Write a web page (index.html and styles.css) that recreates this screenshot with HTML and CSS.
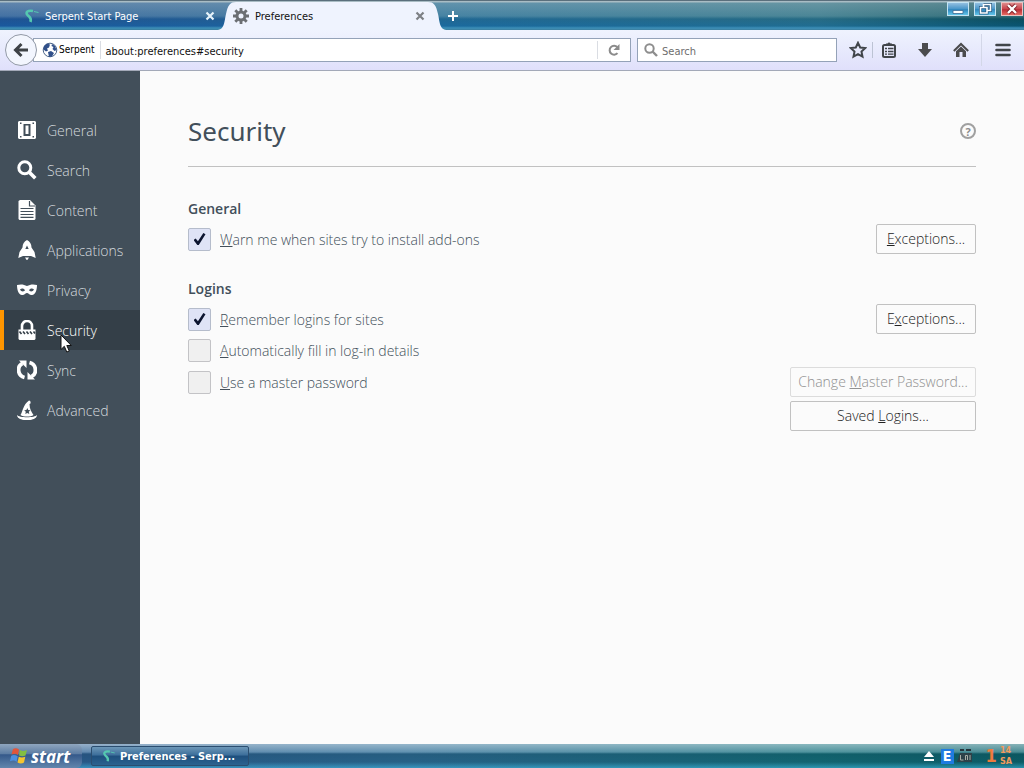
FILE: index.html
```html
<!DOCTYPE html>
<html lang="en">
<head>
    <meta charset="UTF-8">
    <meta name="viewport" content="width=device-width, initial-scale=1.0">
    <title>Preferences</title>
    <link rel="stylesheet" href="styles.css">
</head>
<body>

<!-- Tab strip -->
<header class="titlebar">
    <div class="tab">
        <svg class="tab-icon" viewBox="0 0 16 16"><path d="M9 3C4 2 1 4 3.500 7C5 9 8 9.500 6.500 14" fill="none" stroke="#55c8b0" stroke-width="2.600"/><path d="M10 3.500l4.500 1" stroke="#55c8b0" fill="none"/></svg>
        <span class="tab-label">Serpent Start Page</span>
        <button class="tab-close" aria-label="Close tab"><svg viewBox="0 0 10 10"><path d="M1.500 1.500l7 7M8.500 1.500l-7 7" stroke="currentColor" stroke-width="2.200"/></svg></button>
    </div>
    <div class="tab tab-active">
        <svg class="tab-curve" viewBox="0 0 20 28" preserveAspectRatio="none"><path d="M0 28C9 28 8 20 10 12C12 3 14 0 20 0V28Z" fill="#eff3fe"/></svg>
        <div class="tab-body">
            <svg class="tab-icon" viewBox="0 0 16 16"><g fill="none" stroke="#6c6f73"><circle cx="8" cy="8" r="4" stroke-width="3"/><path d="M8 0v3M8 13v3M0 8h3M13 8h3M2.300 2.300l2.200 2.200M11.500 11.500l2.200 2.200M2.300 13.700l2.200-2.200M11.500 4.500l2.200-2.200" stroke-width="2.800"/></g></svg>
            <span class="tab-label">Preferences</span>
            <button class="tab-close" aria-label="Close tab"><svg viewBox="0 0 10 10"><path d="M1.500 1.500l7 7M8.500 1.500l-7 7" stroke="currentColor" stroke-width="2.200"/></svg></button>
        </div>
        <svg class="tab-curve" viewBox="0 0 20 28" preserveAspectRatio="none"><path d="M20 28C11 28 12 20 10 12C8 3 6 0 0 0V28Z" fill="#eff3fe"/></svg>
    </div>
    <button class="new-tab" aria-label="New tab"><svg viewBox="0 0 10 10"><path d="M5 0v10M0 5h10" stroke="#fff" stroke-width="2"/></svg></button>
    <div class="window-buttons">
        <button class="window-button" aria-label="Minimize"><svg viewBox="0 0 22 14"><path d="M6 8.500h10v3H6z" fill="#fff" stroke="#3b6b94" stroke-width=".8"/></svg></button>
        <button class="window-button" aria-label="Restore"><svg viewBox="0 0 22 14"><path d="M9.500 2.500h7v6h-3M6.500 5.500h6.500v5.500h-6.500z" fill="none" stroke="#24577f" stroke-width="3"/><path d="M9.500 5V2.500h7v6h-3M6.500 5.500h6.500v5.500h-6.500z" fill="none" stroke="#fff" stroke-width="1.600"/></svg></button>
        <button class="window-button window-close" aria-label="Close"><svg viewBox="0 0 22 14"><path d="M7 3l8 8M15 3l-8 8" stroke="#832028" stroke-width="4"/><path d="M7 3l8 8M15 3l-8 8" stroke="#fff" stroke-width="2.400"/></svg></button>
    </div>
</header>

<!-- Navigation bar -->
<div class="toolbar">
    <button class="back" aria-label="Back"><svg viewBox="0 0 16 16"><path d="M8.500 2L2.500 8l6 6M3 8h12" fill="none" stroke="#3f4347" stroke-width="3"/></svg></button>
    <div class="urlbar">
        <svg class="globe" viewBox="0 0 16 16"><circle cx="8" cy="8" r="6.800" fill="#fff" stroke="#4a6488" stroke-width="1"/><path d="M2 4l3-2.500 3 1-1 3-2 1 1 2-2 1-2.500-2zM10 2l3 2 1.500 4-2 1-2-2 1-2-2-1zM6 10l3-1 3 2-2 3.500-3 .5z" fill="#31508a"/></svg>
        <span class="identity">Serpent</span>
        <input class="url" type="text" aria-label="Address" value="about:preferences#security">
        <button class="reload" aria-label="Reload"><svg viewBox="0 0 14 14"><path d="M10.500 10.200A4.500 4.500 0 1 1 10.300 4" fill="none" stroke="#8b8b8b" stroke-width="2"/><path d="M12.500 1v6h-6z" fill="#8b8b8b"/></svg></button>
    </div>
    <div class="searchbar">
        <svg class="search-icon" viewBox="0 0 14 14"><circle cx="5.500" cy="5.500" r="4.200" fill="none" stroke="#8d8d8d" stroke-width="2"/><path d="M8.500 8.500L13 13" stroke="#8d8d8d" stroke-width="2.400"/></svg>
        <input class="search" type="text" aria-label="Search" placeholder="Search">
    </div>
    <button class="tool tool-star" aria-label="Bookmark this page"><svg viewBox="0 0 18 18"><path d="M9 1.800l2.200 4.700 5 .6-3.700 3.500 1 5.100L9 13.200l-4.500 2.500 1-5.100L1.800 7.100l5-.6z" fill="none" stroke="#41454a" stroke-width="2"/></svg></button>
    <span class="separator"></span>
    <button class="tool" aria-label="Bookmarks"><svg viewBox="0 0 18 18"><rect x="3" y="4" width="12" height="12" rx="1.500" fill="none" stroke="#41454a" stroke-width="2"/><path d="M6 4V2.500h1.500C8 1 10 1 10.500 2.500H12V4z" fill="#41454a"/><path d="M5 7.500h2M8 7.500h5.500M5 10.500h2M8 10.500h5.500M5 13.200h2M8 13.200h5.500" stroke="#41454a" stroke-width="1.300"/></svg></button>
    <button class="tool tool-download" aria-label="Downloads"><svg viewBox="0 0 18 18"><path d="M6 2h6v6h4l-7 8-7-8h4z" fill="#4b4b4d"/></svg></button>
    <button class="tool" aria-label="Home"><svg viewBox="0 0 18 18"><path d="M1.800 10L9 3l7.200 7" fill="none" stroke="#4b4b4d" stroke-width="2"/><path d="M4 10.200L9 5.600l5 4.600V16h-3.500v-5h-3v5H4z" fill="#4b4b4d"/></svg></button>
    <span class="separator separator-menu"></span>
    <button class="tool tool-menu" aria-label="Menu"><svg viewBox="0 0 18 18"><path d="M2.500 4h13M2.500 9h13M2.500 14h13" stroke="#41454a" stroke-width="2.600" stroke-linecap="round"/></svg></button>
</div>

<div class="page">
    <!-- Categories -->
    <nav class="categories">
        <a class="category" href="#general">
            <svg viewBox="0 0 20 20"><path fill-rule="evenodd" d="M2 1h16l1 1v16l-1 1H2l-1-1V2zM6.500 4v12h7V4zM3 2.500v1.500h1.500V2.500zM15.500 2.500v1.500H17V2.500zM3 16v1.500h1.500V16zM15.500 16v1.500H17V16z" fill="#fff"/><path d="M8.500 5.500h3V14h-3z" fill="#fff"/></svg>
            General
        </a>
        <a class="category" href="#search">
            <svg viewBox="0 0 20 20"><circle cx="7.800" cy="7.800" r="6" fill="none" stroke="#fff" stroke-width="3"/><path d="M12.300 12.300l6 6" stroke="#fff" stroke-width="3.600"/></svg>
            Search
        </a>
        <a class="category" href="#content">
            <svg viewBox="0 0 20 20"><path d="M3 0h10l5.500 5.500V19l-1 1H2.500l-1-1V1z" fill="#fff"/><path d="M12.500 1v5H18M3.500 8.500h13M3.500 11.500h13M3.500 14.500h13M3.500 17.300h13" fill="none" stroke="#424f5a" stroke-width="1.200"/></svg>
            Content
        </a>
        <a class="category" href="#applications">
            <svg viewBox="0 0 20 20"><path fill-rule="evenodd" d="M10 0c2.800 1.500 4.500 4 4.500 7.500l3 4.500 1.200 6-4.700-2H6l-4.700 2 1.200-6 3-4.500C5.500 4 7.200 1.500 10 0zM10 5.500L8.300 9h3.400z" fill="#fff"/><path d="M8 17.500h4l-2 3z" fill="#fff"/></svg>
            Applications
        </a>
        <a class="category" href="#privacy">
            <svg viewBox="0 0 20 20"><path fill-rule="evenodd" d="M0 5c4-1 7-.5 10 1 3-1.500 6-2 10-1 0 5-1.500 9.500-5 10-2.500.300-3.500-2-5-2s-2.500 2.300-5 2C1.500 14.500 0 10 0 5zM3 9.500c1 2.300 4 2.500 5 .8-1-2-3.500-2.500-5-.8zM17 9.500c-1.500-1.700-4-1.200-5 .8 1 1.700 4 1.500 5-.8z" fill="#fff"/></svg>
            Privacy
        </a>
        <a class="category category-selected" href="#security" aria-current="page">
            <svg viewBox="0 0 20 20"><path d="M5 10V6a5 5 0 0 1 10 0v4" fill="none" stroke="#fff" stroke-width="2.600"/><path d="M1.500 9.500h17V19l-1 1h-15l-1-1z" fill="#fff"/><path d="M2.500 11.500l2 2.500M6 11.500l2 2.500M9.500 11.500l2 2.500M13 11.500l2 2.500M16.500 11.500l1.500 2" stroke="#343f48" stroke-width="1.600"/></svg>
            Security
        </a>
        <a class="category" href="#sync">
            <svg viewBox="0 0 20 20"><path d="M7.500 17.500C0 15.500 0 6 5.500 3.500M12.500 2.500C20 4.500 20 14 14.500 16.500" fill="none" stroke="#fff" stroke-width="3.800"/><path d="M2 .5h7.500V8zM18 19.500h-7.500V12z" fill="#fff"/></svg>
            Sync
        </a>
        <a class="category" href="#advanced">
            <svg viewBox="0 0 20 20"><path d="M0 15c0 7 20 7 20 0-2 3-18 3-20 0z" fill="#fff"/><path fill-rule="evenodd" d="M3.500 15C6 11 6 5 12 .500c1 0 2 1 1.500 3L12.500 4c0 5 2 8 4 11-3 2-10 2-13 0zM10.300 8l-.9 2-2.200.2 1.600 1.600-.5 2.200 2-1.100 2 1.100-.5-2.200 1.600-1.600-2.200-.2z" fill="#fff"/></svg>
            Advanced
        </a>
        <svg class="pointer" viewBox="0 0 12 19"><path d="M1 1v14.500l3.300-3.200L6.800 18l2.500-1-2.500-5.500h4.500z" fill="#fff" stroke="#111"/></svg>
    </nav>

    <!-- Security pane -->
    <main class="pane">
        <div class="pane-header">
            <h1>Security</h1>
            <button class="help" aria-label="Help">?</button>
        </div>

        <h2>General</h2>
        <div class="row">
            <input type="checkbox" id="warnAddons" checked>
            <label for="warnAddons"><u>W</u>arn me when sites try to install add-ons</label>
            <button class="button"><u>E</u>xceptions...</button>
        </div>

        <h2 class="next-group">Logins</h2>
        <div class="row">
            <input type="checkbox" id="rememberLogins" checked>
            <label for="rememberLogins"><u>R</u>emember logins for sites</label>
            <button class="button">E<u>x</u>ceptions...</button>
        </div>
        <div class="row row-tall">
            <input type="checkbox" id="autofill">
            <label for="autofill"><u>A</u>utomatically fill in log-in details</label>
        </div>
        <div class="row row-tall">
            <input type="checkbox" id="masterPassword">
            <label for="masterPassword"><u>U</u>se a master password</label>
            <button class="button button-wide" disabled>Change <u>M</u>aster Password...</button>
        </div>
        <div class="row row-last">
            <button class="button button-wide">Saved <u>L</u>ogins...</button>
        </div>
    </main>
</div>

<!-- Taskbar -->
<footer class="taskbar">
    <button class="start">
        <svg viewBox="0 0 18 18"><path d="M3 2c2-1 4-1 6 .5L8 8C6 6.500 4 6.500 1.500 7.500z" fill="#e2553a"/><path d="M10 3c2 1.200 4 1.200 7 0l-1.500 5.500c-2 1-4 1-6.500 0z" fill="#83bf42"/><path d="M1.200 8.800c2-1 4-1 6.500.4L6.500 15C5 13.500 3 13.200 0 14.200z" fill="#4d8fe0"/><path d="M8.800 9.800c2 1 4 1 6.500 0L14 15.500c-2 1.200-4 1.200-6.500 0z" fill="#f6c52f"/></svg>
        start
    </button>
    <button class="task">
        <svg class="task-icon" viewBox="0 0 16 16"><path d="M9 3C4 2 1 4 3.500 7C5 9 8 9.500 6.500 14" fill="none" stroke="#55c8b0" stroke-width="2.600"/><path d="M10 3.500l4.500 1" stroke="#55c8b0" fill="none"/></svg>
        Preferences - Serp...
    </button>
    <div class="tray">
        <svg class="eject" viewBox="0 0 12 12"><path d="M6 1l5 6H1zM1 9h10v2H1z" fill="#fff"/></svg>
        <span class="tray-e">E</span>
        <svg class="tray-icon" viewBox="0 0 16 16"><path d="M3 1h4v2H3zM9 1h5v2H9z" fill="#26343a"/><path d="M3 5h12v9H0z" fill="#2d4249"/><path d="M3.500 7v5h3M8.500 12V7.500h2V12M13 7v5" stroke="#a9aea6" fill="none"/></svg>
        <span class="clock-hour">1</span>
        <div class="clock-rest">
            <span>14</span>
            <span>SA</span>
        </div>
    </div>
</footer>

</body>
</html>
```

FILE: styles.css
```css
* {
    box-sizing: border-box;
}
body {
    margin: 0;
    min-height: 100vh;
    display: flex;
    flex-direction: column;
    font-family: "DejaVu Sans Condensed", "DejaVu Sans", sans-serif;
    font-size: 11px;
    background: #fbfbfb;
}
button {
    padding: 0;
    border: 0;
    background: none;
    font: inherit;
    color: inherit;
    display: flex;
    align-items: center;
    justify-content: center;
}
input {
    font: inherit;
}
svg {
    display: block;
    flex: none;
}

/* Tab strip */
.titlebar {
    height: 30px;
    padding-top: 2px;
    display: flex;
    background:
        linear-gradient(#5a6f7c 0, #5a6f7c 1px, #a9bcc4 1px, #a9bcc4 2px, rgba(190, 200, 200, 0.4) 3px, rgba(170, 190, 190, 0.25) 16px, rgba(0, 40, 90, 0.1) 19px, rgba(0, 90, 170, 0.25) 26px, #3c8fb8 28px, #3c7f9f 30px),
        linear-gradient(90deg, #22589a 0, #266399 220px, #246f9a 440px, #2b7389 80%, #0c525e 100%);
}
.tab {
    width: 216px;
    display: flex;
    align-items: center;
    color: #fff;
    padding: 0 0 0 24px;
}
.tab-active {
    width: 232px;
    padding: 0;
    color: #111;
}
.tab-curve {
    width: 20px;
    height: 28px;
}
.tab-body {
    flex: 1;
    height: 28px;
    display: flex;
    align-items: center;
    background: #eff3fe;
}
.tab-icon {
    width: 16px;
    height: 16px;
    margin-right: 5px;
}
.tab-body .tab-icon {
    margin: 0 6px 0 -3px;
}
.tab-label {
    flex: 1;
}
.tab-close {
    width: 12px;
    height: 28px;
    color: #e6f3fb;
}
.tab-body .tab-close {
    color: #7d8085;
    margin-right: 2px;
}
.tab-close svg {
    width: 10px;
    height: 10px;
}
.new-tab {
    width: 10px;
    height: 28px;
}
.new-tab svg {
    width: 10px;
    height: 10px;
}
.window-buttons {
    margin-left: auto;
    padding-right: 1px;
    display: flex;
    gap: 5px;
}
.window-button {
    width: 22px;
    height: 14px;
    border: 1px solid #c4e4f3;
    background: linear-gradient(#92bfe0, #4795c8 50%, #2f86bd 55%, #63c6ea);
}
.window-button svg {
    width: 22px;
    height: 14px;
}
.window-close {
    background: linear-gradient(#dd8b8b, #c7424a 50%, #b92d36 55%, #e66a62);
    border-color: #ecc4c4;
}

/* Navigation bar */
.toolbar {
    height: 41px;
    padding-left: 5px;
    display: flex;
    align-items: center;
    background: linear-gradient(#eff3fe, #e0e0fb);
    border-bottom: 1px solid #a3a9b8;
}
.back {
    width: 32px;
    height: 32px;
    border: 1px solid #9299a6;
    border-radius: 50%;
    background: #f3f6fe;
    z-index: 1;
}
.back svg {
    width: 16px;
    height: 16px;
}
.urlbar,
.searchbar {
    height: 24px;
    display: flex;
    align-items: center;
    background: #fff;
    border: 1px solid #94a2b8;
}
.urlbar {
    flex: 1;
    margin-left: -4px;
    padding-left: 8px;
}
.globe {
    width: 16px;
    height: 16px;
}
.identity {
    margin-left: 1px;
    padding-right: 6px;
    border-right: 1px solid #dadde3;
    line-height: 18px;
    font-size: 10px;
}
.url,
.search {
    flex: 1;
    min-width: 0;
    height: 22px;
    padding: 2px 4px 0;
    border: 0;
    outline: 0;
    background: none;
    color: #111;
}
.search::placeholder {
    color: #6d6d6d;
}
.reload {
    width: 33px;
    height: 18px;
    border-left: 1px solid #dadde3;
}
.reload svg {
    width: 14px;
    height: 14px;
}
.searchbar {
    width: 200px;
    margin-left: 6px;
    padding-left: 6px;
}
.search-icon {
    width: 14px;
    height: 14px;
}
.tool {
    width: 32px;
    height: 32px;
}
.tool svg {
    width: 18px;
    height: 18px;
}
.tool-star {
    width: 28px;
    margin-left: 7px;
}
.tool-download {
    width: 40px;
}
.tool-menu {
    width: 42px;
}
.separator {
    width: 1px;
    height: 16px;
    background: #bcc3d4;
}
.separator-menu {
    height: 32px;
    margin-left: 4px;
    background: #d3d7e8;
}

/* Preferences page */
.page {
    flex: 1;
    display: flex;
    font-family: "Open Sans", "Noto Sans", sans-serif;
    font-size: 14px;
    color: #424f5a;
}
.categories {
    width: 140px;
    padding-top: 39px;
    position: relative;
    background: #424f5a;
}
.category {
    height: 40px;
    padding-left: 17px;
    display: flex;
    align-items: center;
    gap: 10px;
    color: #d5dade;
    font-weight: 300;
    text-decoration: none;
}
.category svg {
    width: 20px;
    height: 20px;
}
.category-selected {
    padding-left: 13px;
    border-left: 4px solid #ff9500;
    background: #343f48;
    color: #fff;
}
.pointer {
    position: absolute;
    left: 60px;
    top: 263px;
    width: 12px;
    height: 19px;
}
.pane {
    flex: 1;
    padding: 35px 48px;
}
.pane-header {
    display: flex;
    align-items: center;
    justify-content: space-between;
    padding-bottom: 10px;
    margin-bottom: 27px;
    border-bottom: 1px solid #c1c1c1;
}
h1 {
    margin: 0;
    font-family: "Noto Sans", sans-serif;
    font-size: 26px;
    font-weight: 400;
    line-height: 50px;
}
.help {
    width: 16px;
    height: 16px;
    border: 2px solid #a0a0a0;
    border-radius: 50%;
    font-size: 11px;
    font-weight: 700;
    color: #8c8c8c;
}
h2 {
    margin: 0;
    font-size: 14px;
    font-weight: 600;
    line-height: 30px;
}
.next-group {
    margin-top: 20px;
}
.row {
    min-height: 30px;
    display: flex;
    align-items: center;
    font-weight: 300;
}
.row-tall {
    min-height: 32px;
}
.row-last {
    margin-top: 3px;
}
.row input {
    appearance: none;
    width: 23px;
    height: 23px;
    margin: 0 9px 0 0;
    border: 1px solid #c3c3c6;
    border-radius: 2px;
    background: #f0f0f0;
    display: grid;
    place-items: center;
}
.row input:checked {
    background: #dfe3f6;
    border-color: #b5bccb;
}
.row input:checked::before {
    content: "";
    width: 12px;
    height: 12px;
    background: #0c1430;
    clip-path: polygon(0 58%, 18% 45%, 37% 68%, 82% 0, 100% 10%, 44% 100%, 32% 100%);
}
.button {
    width: 100px;
    height: 30px;
    margin-left: auto;
    padding-bottom: 2px;
    border: 1px solid #c1c1c1;
    border-radius: 2px;
    background: #fbfbfb;
    color: #222;
    white-space: pre;
}
.button-wide {
    width: 186px;
}
.button:disabled {
    color: #909090;
    border-color: #dcdcdc;
}

/* Taskbar */
.taskbar {
    height: 24px;
    display: flex;
    align-items: center;
    color: #fff;
    background:
        linear-gradient(rgba(255, 255, 255, 0.5) 0, rgba(255, 255, 255, 0.25) 8px, rgba(0, 0, 0, 0.15) 10px, rgba(0, 0, 0, 0.1) 18px, rgba(70, 190, 230, 0.5) 100%),
        linear-gradient(90deg, #2d5f95, #2c6d96 40%, #14707d 80%, #0e6570);
}
.start {
    width: 82px;
    height: 24px;
    padding-right: 2px;
    gap: 3px;
    border-radius: 0 6px 6px 0;
    background: linear-gradient(#8fa6bf, #5d7da3 40%, #35598a 45%, #6286ad);
    font-family: "Open Sans", sans-serif;
    font-size: 17px;
    font-weight: 700;
    font-style: italic;
}
.start svg {
    width: 18px;
    height: 18px;
}
.task {
    width: 158px;
    height: 20px;
    margin-left: 9px;
    padding-right: 3px;
    gap: 4px;
    border: 1px solid #2b4e70;
    border-radius: 2px;
    background: linear-gradient(#6d97b8, #3c6e9a 45%, #1e4f7d 50%, #2c628f);
    font-weight: 700;
}
.task-icon {
    width: 14px;
    height: 16px;
}
.tray {
    margin-left: auto;
    padding-right: 12px;
    display: flex;
    align-items: center;
    gap: 3px;
}
.eject {
    width: 12px;
    height: 12px;
    margin-right: 3px;
}
.tray-e {
    width: 13px;
    background: #1f7be0;
    font-weight: 700;
    font-size: 14px;
    line-height: 15px;
    text-align: center;
}
.tray-icon {
    width: 16px;
    height: 16px;
    margin-right: 10px;
}
.clock-hour {
    color: #f07a3c;
    font-size: 18px;
    font-weight: 700;
    line-height: 20px;
}
.clock-rest {
    display: flex;
    flex-direction: column;
    color: #f09a5c;
    font-size: 9px;
    font-weight: 700;
    line-height: 11px;
}
```
